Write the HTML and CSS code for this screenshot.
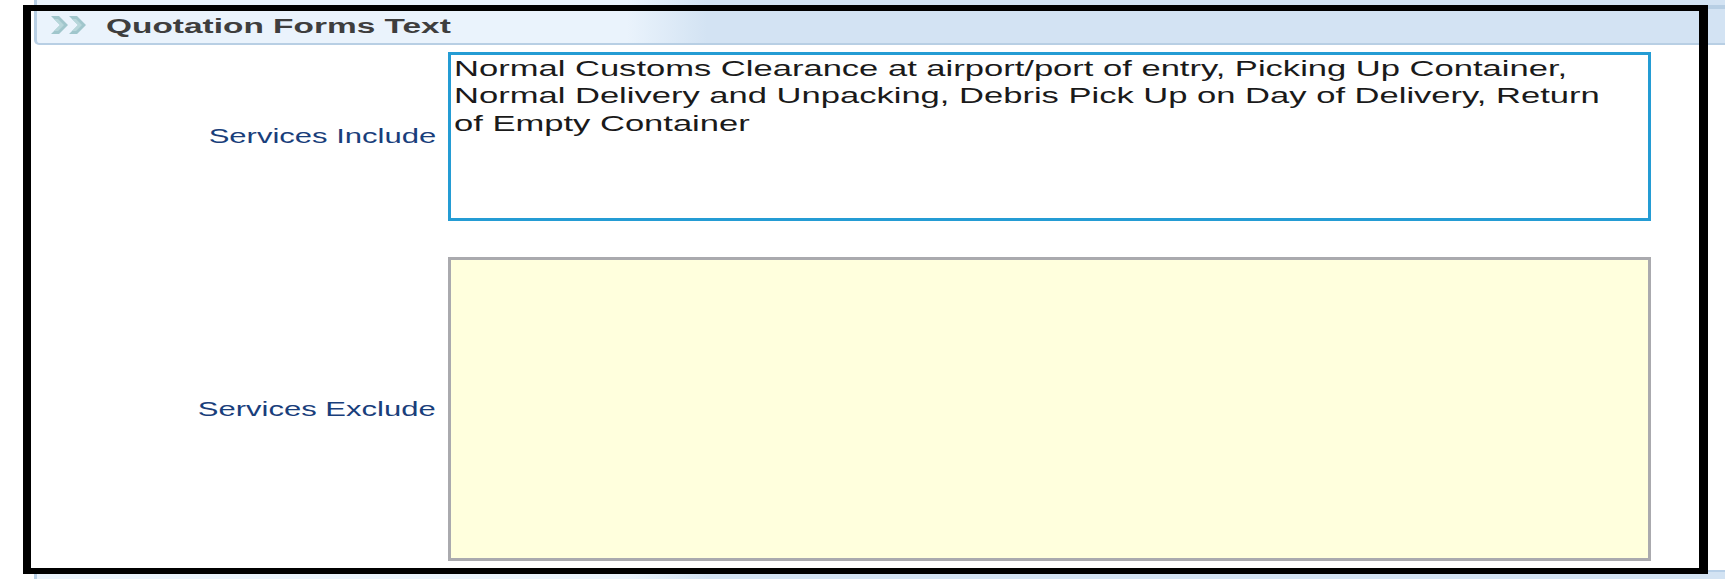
FILE: index.html
```html
<!DOCTYPE html>
<html lang="en">
<head>
<meta charset="utf-8">
<title>Quotation Forms Text</title>
<link rel="stylesheet" href="styles.css">
</head>
<body>
<div class="page">
  <div class="band band-prev"></div>
  <section class="section">
    <header class="sec-head">
      <svg class="chevrons" width="35" height="18" viewBox="0 0 35 18" aria-hidden="true">
        <polygon points="0,0 8,0 17,9 8,18 0,18 9,9" fill="#a0c6cc"/>
        <polygon points="18,0 26,0 35,9 26,18 18,18 27,9" fill="#a0c6cc"/>
        <polygon points="3,3 7,3 13,9 7,15 3,15 9,9" fill="#b7d6da"/>
        <polygon points="21,3 25,3 31,9 25,15 21,15 27,9" fill="#b7d6da"/>
      </svg>
      <span class="title">Quotation Forms Text</span>
    </header>
    <div class="sec-body">
      <div class="row row-include">
        <div class="label"><span class="label-text">Services Include</span></div>
        <div class="field field-include">
          <div class="field-text">Normal Customs Clearance at airport/port of entry, Picking Up Container, Normal Delivery and Unpacking, Debris Pick Up on Day of Delivery, Return of Empty Container</div>
        </div>
      </div>
      <div class="row row-exclude">
        <div class="label"><span class="label-text">Services Exclude</span></div>
        <div class="field field-exclude">
          <div class="field-text"></div>
        </div>
      </div>
    </div>
  </section>
  <div class="band band-next"></div>
</div>
<div class="annot"></div>
</body>
</html>
```

FILE: styles.css
```css
html, body {
  margin: 0;
  padding: 0;
  background: #ffffff;
  overflow: hidden;
}

body {
  font-family: "Liberation Sans", Arial, sans-serif;
  width: 1725px;
  height: 579px;
  position: relative;
}

.page {
  display: flex;
  flex-direction: column;
}

.band {
  margin-left: 34px;
  border-left: 3px solid #b8cfe4;
  background: linear-gradient(to right, #eaf3fc 0, #eaf3fc 590px, #d3e3f3 670px, #d3e3f3 100%);
}

.band-prev {
  height: 5px;
}

.band-next {
  height: 7px;
  border-top: 2px solid #b8d0e8;
}

.sec-head {
  margin-left: 34px;
  height: 34px;
  border-left: 3px solid #b8cfe4;
  border-top: 4px solid #b8cfe4;
  border-bottom: 2px solid #b8cfe4;
  border-bottom-left-radius: 5px;
  background: linear-gradient(to right, #eaf3fc 0, #eaf3fc 590px, #d3e3f3 670px, #d3e3f3 100%);
  display: flex;
  align-items: center;
  padding-left: 14px;
}

.chevrons {
  flex: none;
  display: block;
  margin-top: -2px;
}

.title {
  display: inline-block;
  margin-left: 20px;
  font-weight: bold;
  font-size: 20.9px;
  color: #3e3e3e;
  transform: scaleX(1.6);
  transform-origin: 0 50%;
  white-space: nowrap;
}

.sec-body {
  display: flex;
  flex-direction: column;
  gap: 36px;
  padding-top: 7px;
  padding-bottom: 9px;
}

.row {
  display: flex;
  align-items: center;
}

.row-include {
  height: 169px;
}

.row-exclude {
  height: 304px;
}

.label {
  width: 436px;
  flex: none;
  text-align: right;
}

.label-text {
  display: inline-block;
  font-size: 19.4px;
  color: #193e7b;
  transform: scaleX(1.6);
  transform-origin: 100% 50%;
  white-space: nowrap;
}

.field {
  margin-left: 12px;
  width: 1203px;
  height: 100%;
  box-sizing: border-box;
  border: 3px solid #249cd4;
  padding: 0 3px;
  overflow: hidden;
  background: #ffffff;
}

.field-exclude {
  border-color: #aaaaae;
  background: #ffffdd;
}

.field-text {
  width: 735px;
  font-size: 21.6px;
  line-height: 27.3px;
  color: #1a1a1a;
  transform: scaleX(1.6);
  transform-origin: 0 0;
}

.annot {
  position: absolute;
  left: 23px;
  top: 5px;
  width: 1685px;
  height: 569px;
  box-sizing: border-box;
  border-style: solid;
  border-color: #000000;
  border-width: 6px 9px 6px 8px;
  pointer-events: none;
}
```
